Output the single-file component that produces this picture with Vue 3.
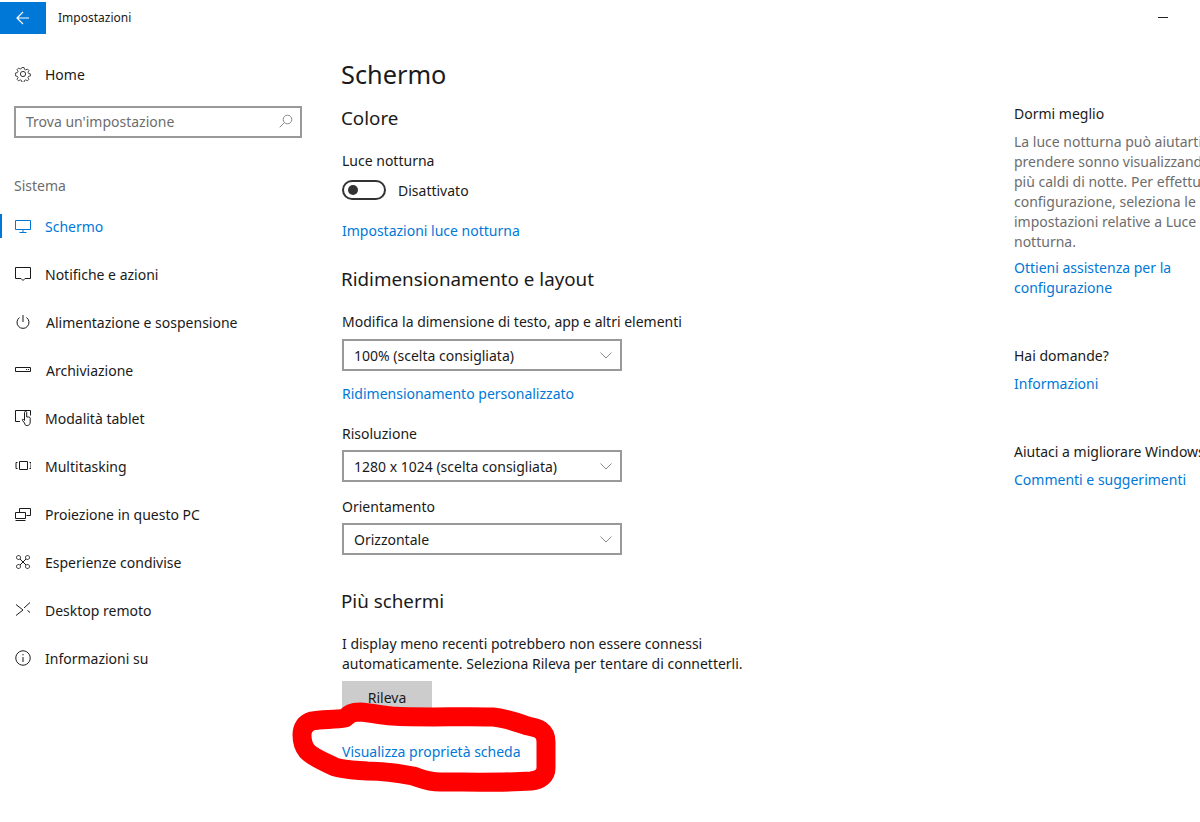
<template>
  <div class="window">
    <header class="titlebar">
      <button class="back">
        <svg width="16" height="16" viewBox="0 0 16 16" fill="none" stroke="#fff" stroke-width="1.2"><path d="M2 8h12M8 2L2 8l6 6" /></svg>
      </button>
      <span class="titlebar__name">Impostazioni</span>
      <span class="minimize"></span>
    </header>

    <div class="columns">
      <nav class="sidebar">
        <div class="home">
          <svg class="icon" width="16" height="16" viewBox="0 0 16 16" fill="none" stroke="#333" stroke-width="1">
            <circle cx="8" cy="8" r="2.6" />
            <path d="M6.800 .8h2.400l.4 2 1.500.7 1.800-1.100 1.700 1.700-1.100 1.800.7 1.500 2 .4v2.400l-2 .4-.7 1.500 1.100 1.800-1.700 1.700-1.800-1.100-1.500.7-.4 2H6.800l-.4-2-1.500-.7-1.800 1.100-1.700-1.700 1.100-1.800-.7-1.500-2-.4V6.800l2-.4.7-1.500-1.100-1.800 1.700-1.700 1.800 1.100 1.500-.7z" transform="translate(.8 .8) scale(.9)" />
          </svg>
          <span>Home</span>
        </div>
        <div class="search">
          <span>Trova un'impostazione</span>
          <svg width="14" height="14" viewBox="0 0 14 14" fill="none" stroke="#8a8a8a" stroke-width="1"><circle cx="8.500" cy="5.500" r="4.300" /><path d="M5.300 8.700L.7 13.300" /></svg>
        </div>
        <p class="sidebar__group">Sistema</p>
        <ul class="menu">
          <li v-for="item in menu" :key="item.label" class="menu__item" :class="{ 'menu__item--active': item.active }">
            <svg class="icon" width="16" height="16" viewBox="0 0 16 16" fill="none" stroke="currentColor" stroke-width="1">
              <path :d="item.icon" />
            </svg>
            <span :class="{ 'menu__shift': item.shift }">{{ item.label }}</span>
          </li>
        </ul>
      </nav>

      <main class="content">
        <h1>Schermo</h1>

        <h2 class="first">Colore</h2>
        <p class="label">Luce notturna</p>
        <div class="toggle-row">
          <span class="toggle"><span class="toggle__dot"></span></span>
          <span>Disattivato</span>
        </div>
        <a class="link link--night">Impostazioni luce notturna</a>

        <h2 class="layout">Ridimensionamento e layout</h2>
        <p class="label label--scale">Modifica la dimensione di testo, app e altri elementi</p>
        <div class="select select--first">
          <span>100% (scelta consigliata)</span>
          <svg width="12" height="7" viewBox="0 0 12 7" fill="none" stroke="#8a8a8a" stroke-width="1"><path d="M.5 .5L6 6l5.500-5.500" /></svg>
        </div>
        <a class="link link--custom">Ridimensionamento personalizzato</a>
        <p class="label label--res">Risoluzione</p>
        <div class="select">
          <span>1280 x 1024 (scelta consigliata)</span>
          <svg width="12" height="7" viewBox="0 0 12 7" fill="none" stroke="#8a8a8a" stroke-width="1"><path d="M.5 .5L6 6l5.500-5.500" /></svg>
        </div>
        <p class="label label--res2">Orientamento</p>
        <div class="select">
          <span>Orizzontale</span>
          <svg width="12" height="7" viewBox="0 0 12 7" fill="none" stroke="#8a8a8a" stroke-width="1"><path d="M.5 .5L6 6l5.500-5.500" /></svg>
        </div>

        <h2 class="screens">Più schermi</h2>
        <p class="note">I display meno recenti potrebbero non essere connessi<br />automaticamente. Seleziona Rileva per tentare di connetterli.</p>
        <button class="detect">Rileva</button>
        <a class="link link--props">Visualizza proprietà scheda</a>
      </main>

      <aside class="aside">
        <p class="aside__title">Dormi meglio</p>
        <p class="aside__text">La luce notturna può aiutarti a<br />prendere sonno visualizzando colori<br />più caldi di notte. Per effettuare la<br />configurazione, seleziona le<br />impostazioni relative a Luce<br />notturna.</p>
        <a class="link aside__link">Ottieni assistenza per la<br />configurazione</a>
        <p class="aside__title aside__title--q">Hai domande?</p>
        <a class="link aside__link aside__link--info">Informazioni</a>
        <p class="aside__title aside__title--h">Aiutaci a migliorare Windows</p>
        <a class="link aside__link aside__link--send">Commenti e suggerimenti</a>
      </aside>
    </div>

    <!-- scarabocchio rosso sopra il link -->
    <svg class="scribble" width="1200" height="822" viewBox="0 0 1200 822" fill="none">
      <path d="M302 735C302 728 305 723 312 721C322 719 335 720 345 718C349 714 352 712 360 712C372 713 380 715 392 716C425 718 460 716 493 717C505 718 516 722 528 726C538 728 546 730 546 742L546 768C546 776 540 780 531 781C500 783 470 782 440 782C428 782 420 778 413 776C398 773 382 771 367 771C355 770 345 770 335 767C325 762 312 757 307 751C303 746 302 741 302 735Z" stroke="#ff0000" stroke-width="19" stroke-linecap="round" stroke-linejoin="round" />
    </svg>
  </div>
</template>

<script setup>
const menu = [
  { label: 'Schermo', active: true, icon: 'M.5 2.500h15v9H.5zM8 11.500v3M4.500 14.500h7' },
  { label: 'Notifiche e azioni', icon: 'M.5 1.500h15v11H10L8 14.500 6 12.500H.5z' },
  { label: 'Alimentazione e sospensione', shift: true, icon: 'M8 1v7M4.500 3.500a6 6 0 1 0 7 0' },
  { label: 'Archiviazione', shift: true, icon: 'M.5 5.500h15v4H.5zM11 7.500h1M13 7.500h1' },
  { label: 'Modalità tablet', icon: 'M5 11.500H.5V.5h15v5M9.500 13l-2-2.500c-.7-.8.3-1.700 1-1l1 1V2.500a1.100 1.100 0 0 1 2.200 0V7h2A1.500 1.500 0 0 1 15.200 8.500V12c0 2-1 3.500-3 3.500h-1c-.8 0-1.200-.8-1.700-2.500z' },
  { label: 'Multitasking', icon: 'M4.500 3.500h8v8h-8zM2.500 4.500H1v6h1.500M14.500 4.500H16v6h-1.500' },
  { label: 'Proiezione in questo PC', icon: 'M4.500 6V2.500h11v7h-4M.5 6.500h10v6H.5zM.5 14.500h10' },
  { label: 'Esperienze condivise', icon: 'M5 5l6 6M11 5l-6 6M3.500 1.500a2 2 0 1 0 .01 0M12.500 1.500a2 2 0 1 0 .01 0M3.500 10.500a2 2 0 1 0 .01 0M12.500 10.500a2 2 0 1 0 .01 0' },
  { label: 'Desktop remoto', icon: 'M1 2.500l7 5.500-7 5.500M15 .5L9 6M12.500 8.500l2.500 2' },
  { label: 'Informazioni su', icon: 'M8 .8a7.200 7.200 0 1 0 .01 0M8 7v5M8 4v1.300' }
]
</script>

<style>
html, body {
  margin: 0;
  background: #fff;
  overflow: hidden;
}
</style>

<style scoped>
.window {
  position: relative;
  width: 1200px;
  height: 822px;
  overflow: hidden;
  background: #fff;
  color: #1a1a1a;
  font-family: "Noto Sans", "Open Sans", sans-serif;
  font-size: 14px;
}

p, h1, h2 {
  margin: 0;
  font-weight: 400;
}

.titlebar {
  height: 34px;
  padding-top: 2px;
  box-sizing: border-box;
  display: flex;
  align-items: center;
}

.back {
  width: 46px;
  height: 32px;
  border: 0;
  padding: 0;
  background: #0078d7;
  display: flex;
  align-items: center;
  justify-content: center;
}

.titlebar__name {
  margin-left: 12px;
  font-size: 12px;
  margin-top: -2px;
}

.minimize {
  width: 10px;
  height: 1px;
  background: #222;
  margin-left: auto;
  margin-right: 32px;
  margin-top: -2px;
}

.columns {
  display: flex;
}

.sidebar {
  width: 342px;
  flex-shrink: 0;
  box-sizing: border-box;
  padding-top: 28px;
}

.home {
  display: flex;
  align-items: center;
  gap: 14px;
  padding-left: 15px;
  height: 24px;
}

.search {
  margin: 20px 40px 0 14px;
  height: 32px;
  box-sizing: border-box;
  border: 2px solid #999;
  display: flex;
  align-items: center;
  justify-content: space-between;
  padding: 0 7px 2px 10px;
  color: #6d6d6d;
}

.sidebar__group {
  margin: 38px 0 0 14px;
  color: #6d6d6d;
  line-height: 20px;
}

.menu {
  list-style: none;
  margin: 6px 0 0;
  padding: 0;
}

.menu__item {
  height: 48px;
  display: flex;
  align-items: center;
  gap: 14px;
  padding-left: 15px;
  position: relative;
  color: #1a1a1a;
}

.menu__item--active {
  color: #0078d7;
}

.menu__item--active::before {
  content: "";
  position: absolute;
  left: 0;
  top: 12px;
  width: 2px;
  height: 24px;
  background: #0078d7;
}

.menu__shift {
  margin-left: 1px;
}

.icon {
  flex-shrink: 0;
}

.content {
  width: 672px;
  flex-shrink: 0;
}

h1 {
  font-size: 25.3px;
  line-height: 34px;
  margin: 23px 0 0 -1px;
}

h2 {
  font-size: 18.8px;
  line-height: 26px;
  margin-left: -1px;
}

h2.first {
  margin-top: 14px;
}

h2.layout {
  margin-top: 25px;
}

h2.screens {
  margin-top: 33px;
}

.label {
  line-height: 20px;
}

.first + .label {
  margin-top: 20px;
}

.label--scale {
  margin-top: 20px;
}

.label--res {
  margin-top: 20px;
}

.label--res2 {
  margin-top: 15px;
}

.toggle-row {
  display: flex;
  align-items: center;
  gap: 12px;
  margin-top: 9px;
  height: 20px;
}

.toggle {
  width: 44px;
  height: 20px;
  box-sizing: border-box;
  border: 2px solid #333;
  border-radius: 10px;
  display: flex;
  align-items: center;
  padding-left: 4px;
}

.toggle__dot {
  width: 10px;
  height: 10px;
  border-radius: 50%;
  background: #333;
}

.link {
  display: block;
  color: #0078d7;
  line-height: 20px;
}

.link--night {
  margin-top: 21px;
}

.link--custom {
  margin-top: 13px;
}

.link--props {
  margin-top: 29px;
}

.select {
  margin-top: 6px;
  width: 280px;
  height: 32px;
  box-sizing: border-box;
  border: 2px solid #999;
  display: flex;
  align-items: center;
  justify-content: space-between;
  padding: 0 8px 0 10px;
}

.select--first {
  margin-top: 7px;
}

.note {
  margin-top: 20px;
  line-height: 20px;
}

.detect {
  display: block;
  margin-top: 7px;
  width: 90px;
  height: 32px;
  border: 0;
  padding: 0;
  background: #ccc;
  color: #1a1a1a;
  font: inherit;
}

.aside {
  flex: 1;
  min-width: 0;
  padding-top: 70px;
  white-space: nowrap;
}

.aside__title {
  line-height: 20px;
}

.aside__title--q {
  margin-top: 48px;
}

.aside__title--h {
  margin-top: 48px;
}

.aside__text {
  margin-top: 8px;
  line-height: 20px;
  color: #6d6d6d;
}

.aside__link {
  margin-top: 6px;
}

.aside__link--info {
  margin-top: 8px;
}

.aside__link--send {
  margin-top: 8px;
}

.scribble {
  position: absolute;
  left: 0;
  top: 0;
  pointer-events: none;
}
</style>
